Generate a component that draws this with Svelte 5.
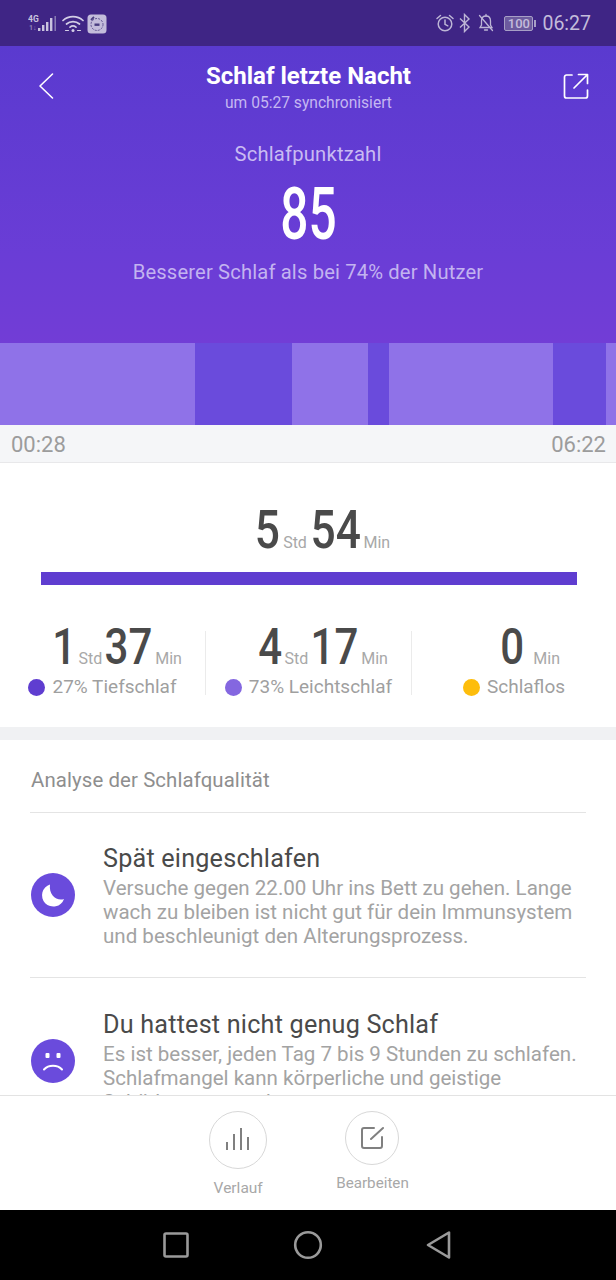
<script>
  const segments = [
    { w: 195, deep: false }, { w: 96.5, deep: true }, { w: 76.5, deep: false }, { w: 21, deep: true },
    { w: 164, deep: false }, { w: 52.5, deep: true }, { w: 10.5, deep: false }
  ];
  const stats = [
    { h: '1', m: '37', label: '27% Tiefschlaf', dot: 'deep' },
    { h: '4', m: '17', label: '73% Leichtschlaf', dot: 'light' },
    { h: null, m: '0', label: 'Schlaflos', dot: 'awake' }
  ];
</script>

<div class="page">
  <div class="status">
    <div class="status-left">
      <svg width="31" height="20" viewBox="0 0 31 20">
        <text x="0" y="8" class="net">4G</text>
        <text x="1" y="16" class="net dim">1↓</text>
        <g fill="#c9c3de">
          <rect x="10" y="14" width="2.4" height="3"/><rect x="14" y="11" width="2.4" height="6"/>
          <rect x="18" y="8" width="2.4" height="9"/><rect x="22" y="4" width="2.4" height="13"/>
        </g>
        <rect x="26.500" y="2" width="1.400" height="15" fill="#8f84b8"/>
      </svg>
      <svg class="wifi" width="22" height="20" viewBox="0 0 22 20" fill="none" stroke="#d3cee6" stroke-width="1.700" stroke-linecap="round">
        <path d="M1 6.500c5.500-5.300 14.500-5.300 20 0"/><path d="M4.500 10c3.600-3.300 9.400-3.300 13 0"/><path d="M8 13.200c1.800-1.500 4.200-1.500 6 0"/>
        <circle cx="11" cy="16.500" r="1.500" fill="#d3cee6" stroke="none"/>
        <path d="M3.500 16.500h3M15.500 16.500h3" stroke-width="1.200"/>
      </svg>
      <svg width="20" height="20" viewBox="0 0 20 20">
        <rect x="0.500" y="0.500" width="19" height="19" rx="3.500" fill="#c3bcdb"/>
        <circle cx="10" cy="10.500" r="6" fill="none" stroke="#5e5290" stroke-width="1" stroke-dasharray="2 1.200"/>
        <path d="M4 6l3-3" stroke="#4a3d80" stroke-width="1.800"/>
        <rect x="7.500" y="9.500" width="5" height="2.400" fill="#4a3d80"/>
      </svg>
    </div>
    <div class="status-right">
      <svg width="20" height="20" viewBox="0 0 20 20" fill="none" stroke="#bdb6d6" stroke-width="1.500" stroke-linecap="round">
        <circle cx="10" cy="11" r="6.800"/><path d="M10 7v4.300l2.800 1.500"/><path d="M2 5.500L5.500 2.500M18 5.500L14.500 2.500"/>
      </svg>
      <svg class="bt" width="14" height="20" viewBox="0 0 14 20" fill="none" stroke="#bdb6d6" stroke-width="1.400">
        <path d="M2 5.500l9 8.500-4.500 4.500V1.500L11 6l-9 8.500"/>
      </svg>
      <svg class="bell" width="18" height="20" viewBox="0 0 18 20" fill="none" stroke="#bdb6d6" stroke-width="1.300" stroke-linecap="round">
        <path d="M9 3c-3 0-4.500 2.300-4.500 5v4L3 14.500h12L13.500 12V8C13.500 5.300 12 3 9 3z"/><path d="M7.500 17h3M9 1.500V3M2.500 2.500l13 15"/>
      </svg>
      <div class="battery"><span>100</span></div>
      <span class="clock">06:27</span>
    </div>
  </div>

  <header class="hero">
    <div class="nav-row">
      <svg class="back" width="16" height="28" viewBox="0 0 16 28" fill="none" stroke="#fff" stroke-width="1.600" stroke-linecap="round" stroke-linejoin="round">
        <path d="M14.500 2L2 14l12.500 12"/>
      </svg>
      <div class="title">
        <h1>Schlaf letzte Nacht</h1>
        <p>um 05:27 synchronisiert</p>
      </div>
      <svg class="share" width="26" height="26" viewBox="0 0 26 26" fill="none" stroke="#fff" stroke-width="1.700" stroke-linecap="round" stroke-linejoin="round">
        <path d="M9 2H3.500A2 2 0 0 0 1.500 4v19a2 2 0 0 0 2 2h19a2 2 0 0 0 2-2v-6"/><path d="M11 15L24 2M15.500 1.500h9v9"/>
      </svg>
    </div>
    <div class="score-label">Schlafpunktzahl</div>
    <div class="score"><span class="hero-num">85</span></div>
    <div class="compare">Besserer Schlaf als bei 74% der Nutzer</div>
  </header>

  <div class="chart">
    {#each segments as s}
      <div class="seg" class:deep={s.deep} style="flex-grow:{s.w}"></div>
    {/each}
  </div>
  <div class="times"><span>00:28</span><span>06:22</span></div>

  <section class="summary">
    <div class="total">
      <span class="big narrow">5</span><span class="unit">Std</span><span class="big narrow two">54</span><span class="unit">Min</span>
    </div>
    <div class="bar"></div>
    <div class="stats">
      {#each stats as st}
        <div class="stat" class:solo={!st.h}>
          <div class="val">
            {#if st.h}<span class="mid narrow">{st.h}</span><span class="unit">Std</span>{/if}
            <span class="mid narrow" class:two={st.m.length > 1}>{st.m}</span><span class="unit">Min</span>
          </div>
          <div class="lab"><i class="dot {st.dot}"></i>{st.label}</div>
        </div>
      {/each}
    </div>
  </section>

  <section class="analysis">
    <h2>Analyse der Schlafqualität</h2>
    <div class="item">
      <div class="ico">
        <svg width="44" height="44" viewBox="0 0 44 44"><circle cx="22" cy="22" r="22" fill="#6a4bdc"/>
          <path d="M19 11.500a11.300 11.300 0 1 0 14 14.500c-7 2.500-15.500-4-14-14.500z" fill="#fff"/></svg>
      </div>
      <div class="txt">
        <h3>Spät eingeschlafen</h3>
        <p>Versuche gegen 22.00 Uhr ins Bett zu gehen. Lange wach zu bleiben ist nicht gut für dein Immunsystem und beschleunigt den Alterungsprozess.</p>
      </div>
    </div>
    <div class="item second">
      <div class="ico">
        <svg width="44" height="44" viewBox="0 0 44 44"><circle cx="22" cy="22" r="22" fill="#6a4bdc"/>
          <rect x="14.500" y="14" width="4" height="5" rx="1" fill="#fff"/><rect x="25.500" y="14" width="4" height="5" rx="1" fill="#fff"/>
          <path d="M13 30.500c4.500-5 13.500-5 18 0" fill="none" stroke="#fff" stroke-width="2" stroke-linecap="round"/></svg>
      </div>
      <div class="txt">
        <h3>Du hattest nicht genug Schlaf</h3>
        <p>Es ist besser, jeden Tag 7 bis 9 Stunden zu schlafen. Schlafmangel kann körperliche und geistige Schäden verursachen.</p>
      </div>
    </div>
  </section>

  <footer class="actions">
    <div class="action verlauf">
      <div class="ring big-ring">
        <svg width="24" height="24" viewBox="0 0 24 24" stroke="#808080" stroke-width="2">
          <path d="M1 14v8M8 6v16M15 0v22M22 9v13"/>
        </svg>
      </div>
      <span>Verlauf</span>
    </div>
    <div class="action bearbeiten">
      <div class="ring small-ring">
        <svg width="24" height="24" viewBox="0 0 24 24" fill="none" stroke="#808080" stroke-width="2" stroke-linecap="round" stroke-linejoin="round">
          <path d="M14 2H4a2 2 0 0 0-2 2v16a2 2 0 0 0 2 2h16a2 2 0 0 0 2-2V11"/><path d="M11 13L23 2"/>
        </svg>
      </div>
      <span>Bearbeiten</span>
    </div>
  </footer>

  <nav class="sysnav">
    <svg width="28" height="28" viewBox="0 0 28 28" fill="none" stroke="#9a9a9a" stroke-width="2.600" stroke-linejoin="round"><rect x="2.500" y="2.500" width="23" height="23" rx="1.500"/></svg>
    <svg class="circ" width="30" height="30" viewBox="0 0 30 30" fill="none" stroke="#9a9a9a" stroke-width="2.600"><circle cx="15" cy="15" r="12.800"/></svg>
    <svg class="tri" width="28" height="30" viewBox="0 0 28 30" fill="none" stroke="#9a9a9a" stroke-width="2.600" stroke-linejoin="round"><path d="M24 2.500v25L3 15z"/></svg>
  </nav>
</div>

<style>
  :global(body) { margin: 0; background: #fff; }
  .page {
    width: 616px; height: 1280px; display: flex; flex-direction: column; overflow: hidden;
    font-family: Roboto, "Liberation Sans", sans-serif; background: #fff;
  }
  .narrow { display: inline-block; transform: scaleX(.82); transform-origin: center; margin: 0 -.05em; }
  .narrow.two { margin: 0 -.1em; }

  .status {
    height: 46px; flex: none; box-sizing: border-box; padding: 0 25px 0 28px;
    background: #3f2585; display: flex; justify-content: space-between; align-items: center;
    color: #c3bcdb;
  }
  .status-left { display: flex; align-items: center; gap: 3px; margin-top: 1px; }
  .net { font: 700 8.500px Roboto, sans-serif; fill: #c9c3de; }
  .net.dim { font-size: 7px; fill: #8f84b8; }
  .status-right { display: flex; align-items: center; }
  .bt { margin-left: 3px; }
  .bell { margin-left: 5px; }
  .battery {
    margin-left: 9px; width: 29px; height: 15px; box-sizing: border-box; border: 1px solid #a79fc6; border-radius: 2px;
    position: relative; display: flex; align-items: center; justify-content: center;
    font-size: 13px; font-weight: 500; color: #c3bcdb; line-height: 1; background: #6c5a9e;
  }
  .battery::after { content: ''; position: absolute; right: -4px; top: 3px; width: 2px; height: 7px; background: #a79fc6; }
  .clock { margin-left: 9px; font-size: 19.500px; color: #c3bcdb; }

  .hero {
    height: 297px; flex: none; color: #fff; display: flex; flex-direction: column; align-items: center;
    background: linear-gradient(180deg, #5a3acf 0%, #6a3dd6 70%, #723dd6 100%);
  }
  .nav-row { width: 100%; display: flex; justify-content: space-between; align-items: flex-start; box-sizing: border-box; padding: 17px 27px 0 38px; }
  .back { margin-top: 9px; }
  .share { margin-top: 10px; }
  .title { text-align: center; }
  h1 { margin: 0; font-size: 24px; font-weight: 700; line-height: 27px; white-space: nowrap; }
  .title p { margin: 4px 0 0; font-size: 15.600px; line-height: 18px; color: #c5b7f1; }
  .score-label { margin-top: 30px; font-size: 20.200px; line-height: 24px; color: #c9bbf2; letter-spacing: .2px; }
  .score { margin-top: 12px; font-size: 73px; line-height: 72px; font-weight: 500; }
  .hero-num { display: inline-block; transform: scaleX(.68); transform-origin: center; }
  .compare { margin-top: 10px; font-size: 20.200px; line-height: 24px; color: #c3b3f0; letter-spacing: .15px; }

  .chart { height: 82px; flex: none; display: flex; }
  .seg { background: #8f72e8; flex-basis: 0; }
  .seg.deep { background: #6a4bdc; }
  .times {
    height: 38px; flex: none; box-sizing: border-box; background: #f5f6f8; border-bottom: 1px solid #e8e8ea;
    display: flex; justify-content: space-between; align-items: center; padding: 2px 10px 0 11px; font-size: 22px; color: #9c9c9c;
  }

  .summary { height: 264px; flex: none; box-sizing: border-box; }
  .total { display: flex; justify-content: center; align-items: baseline; height: 70px; padding: 32px 0 0 32px; }
  .big { font-size: 54px; line-height: 70px; font-weight: 500; color: #4a4a4a; }
  .unit { font-size: 16px; color: #a8a8a8; margin: 0 3px; }
  .bar { margin: 7px 39px 0 41px; height: 13px; background: #5f3dd0; }
  .stats { display: grid; grid-template-columns: 206px 206px 1fr; margin-top: 46px; }
  .stat { height: 64px; border-right: 1px solid #ebebeb; }
  .stat:last-child { border-right: 0; }
  .val { display: flex; justify-content: center; align-items: baseline; height: 40px; padding-left: 32px; margin-top: -4px; }
  .solo .val { padding-left: 36px; }
  .solo .val .unit { margin-left: 9px; }
  .mid { font-size: 50px; line-height: 40px; font-weight: 500; color: #4a4a4a; transform: scaleX(.84); }
  .lab { display: flex; align-items: center; justify-content: center; font-size: 19px; color: #9f9f9f; margin-top: 10px; line-height: 20px; white-space: nowrap; }
  .dot { width: 17px; height: 17px; border-radius: 50%; margin-right: 7px; }
  .dot.deep { background: #5f3dd0; }
  .dot.light { background: #8467e0; }
  .dot.awake { background: #fdbd0c; }

  .analysis {
    flex: 1; min-height: 0; overflow: hidden; border-top: 13px solid #f0f1f3; box-sizing: border-box; padding: 0 30px;
  }
  h2 { margin: 0; height: 73px; box-sizing: border-box; padding-top: 28px; text-indent: 1px; font-size: 20.400px; line-height: 24px; font-weight: 400; color: #8e8e8e; border-bottom: 1px solid #e4e4e4; letter-spacing: .1px; }
  .item { display: flex; align-items: center; height: 165px; box-sizing: border-box; border-bottom: 1px solid #e4e4e4; }
  .item.second { border-bottom: 0; }
  .ico { width: 73px; flex: none; }
  .ico svg { display: block; margin-left: 1px; }
  .txt { max-width: 478px; padding-top: 2px; }
  h3 { margin: 0; font-size: 25.200px; line-height: 30px; font-weight: 400; color: #4a4a4a; letter-spacing: .2px; }
  .txt p { margin: 2px 0 0; font-size: 20.550px; line-height: 24px; color: #a3a3a3; }

  .actions { height: 115px; flex: none; background: #fff; border-top: 1px solid #e3e3e3; box-sizing: border-box; display: flex; justify-content: center; align-items: flex-start; gap: 69px; padding-left: 2px; }
  .action { display: flex; flex-direction: column; align-items: center; color: #a8a8a8; font-size: 15.500px; }
  .ring { border: 1px solid #d8d8d8; border-radius: 50%; display: flex; align-items: center; justify-content: center; box-sizing: border-box; }
  .big-ring { width: 58px; height: 58px; margin-top: 15px; }
  .small-ring { width: 54px; height: 54px; margin-top: 15px; }
  .verlauf span { margin-top: 10px; }
  .bearbeiten { font-size: 15.200px; }
  .bearbeiten span { margin-top: 9px; }

  .sysnav { height: 70px; flex: none; background: #000; display: flex; justify-content: center; align-items: center; gap: 104px; padding-right: 1px; }
  .circ { margin-left: -1px; }
  .tri { margin-left: -2px; }
</style>
